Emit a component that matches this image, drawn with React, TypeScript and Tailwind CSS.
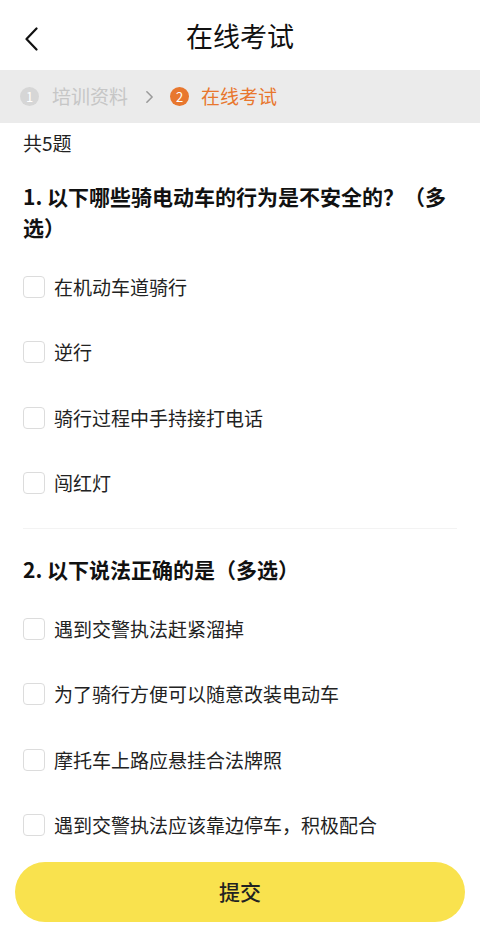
import React, { useState } from "react";

const questions = [
  {
    title: "1. 以下哪些骑电动车的行为是不安全的？（多选）",
    options: ["在机动车道骑行", "逆行", "骑行过程中手持接打电话", "闯红灯"],
  },
  {
    title: "2. 以下说法正确的是（多选）",
    options: [
      "遇到交警执法赶紧溜掉",
      "为了骑行方便可以随意改装电动车",
      "摩托车上路应悬挂合法牌照",
      "遇到交警执法应该靠边停车，积极配合",
    ],
  },
];

function Checkbox({ checked }: { checked: boolean }) {
  return (
    <span
      className={
        "flex h-[22px] w-[22px] shrink-0 items-center justify-center rounded-[4px] border-[1.5px] " +
        (checked ? "border-[#e8772e] bg-[#e8772e]" : "border-[#dcdcdc] bg-white")
      }
    >
      {checked && (
        <svg viewBox="0 0 16 16" className="h-[14px] w-[14px]" fill="none" stroke="white" strokeWidth="2">
          <path d="M3 8.5l3.2 3L13 4.5" />
        </svg>
      )}
    </span>
  );
}

export default function App() {
  const [answers, setAnswers] = useState<Record<string, boolean>>({});

  function toggle(key: string) {
    setAnswers((a) => ({ ...a, [key]: !a[key] }));
  }

  return (
    <div
      className="flex min-h-screen w-full flex-col bg-white text-[#111]"
      style={{ fontFamily: '"Noto Sans CJK SC", sans-serif' }}
    >
      {/* header */}
      <header className="relative flex h-[70px] items-center justify-center">
        <button className="absolute left-[17px] top-[23px] p-1">
          <svg viewBox="0 0 24 24" className="h-[24px] w-[24px]" fill="none" stroke="#111" strokeWidth="2.2" strokeLinecap="round" strokeLinejoin="round">
            <path d="M15.5 1.5L5.5 12l10 10.5" />
          </svg>
        </button>
        <h1 className="text-[27px] leading-none">在线考试</h1>
      </header>

      {/* steps */}
      <div className="flex h-[53px] items-center bg-[#ebebeb] px-[20px] text-[19px]">
        <span className="flex h-[19px] w-[19px] items-center justify-center rounded-full bg-[#d6d6d6] text-[13px] leading-none text-white">1</span>
        <span className="ml-[13px] text-[#c6c6c6]">培训资料</span>
        <svg viewBox="0 0 10 16" className="ml-[17px] h-[14px] w-[9px]" fill="none" stroke="#9a9a9a" strokeWidth="1.8" strokeLinecap="round" strokeLinejoin="round">
          <path d="M2 2l6 6-6 6" />
        </svg>
        <span className="ml-[16px] flex h-[19px] w-[19px] items-center justify-center rounded-full bg-[#e8772e] text-[13px] leading-none text-white">2</span>
        <span className="ml-[12px] text-[#e8772e]">在线考试</span>
      </div>

      <main className="flex-1 px-[23px]">
        <p className="pt-[8px] text-[19px] leading-[24px] text-[#222]">共5题</p>

        {questions.map((q, qi) => (
          <section key={qi} className={qi === 0 ? "" : "border-t border-[#f3f3f3]"}>
            <h2 className={(qi === 0 ? "mt-[26px]" : "mt-[25px]") + " mb-[11px] text-[21px] font-semibold leading-[31px]"}>
              {q.title}
            </h2>
            <ul className={qi === 0 ? "mb-[12px]" : ""}>
              {q.options.map((o, oi) => {
                const key = `${qi}-${oi}`;
                return (
                  <li
                    key={key}
                    onClick={() => toggle(key)}
                    className="flex h-[65.5px] cursor-pointer items-center gap-[9px]"
                  >
                    <Checkbox checked={!!answers[key]} />
                    <span className="text-[19px] text-[#222]">{o}</span>
                  </li>
                );
              })}
            </ul>
          </section>
        ))}
      </main>

      <div className="px-[15px] pb-[11px] pt-[4px]">
        <button className="flex h-[60px] w-full items-center justify-center rounded-full bg-[#f9e24e] text-[21px] font-medium text-[#222]">
          提交
        </button>
      </div>
    </div>
  );
}
